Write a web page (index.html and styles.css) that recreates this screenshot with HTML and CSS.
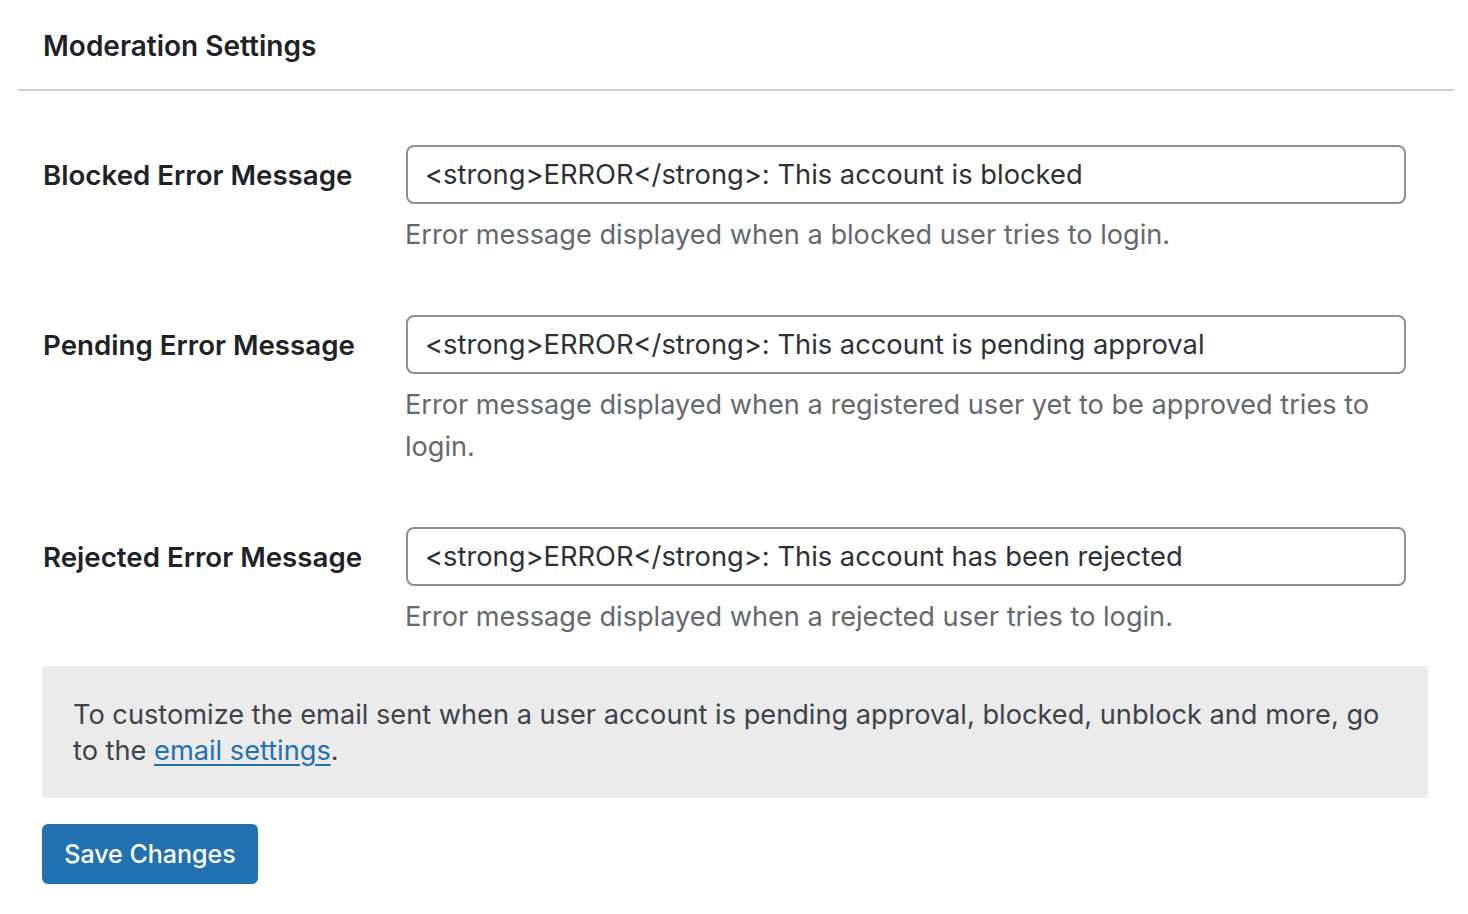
FILE: index.html
```html
<!DOCTYPE html>
<html lang="en">
<head>
<meta charset="utf-8">
<title>Moderation Settings</title>
<link rel="stylesheet" href="styles.css">
</head>
<body>
<div class="page">
  <h2 class="section-title">Moderation Settings</h2>
  <form class="settings">
    <div class="form-table">
      <div class="row">
        <label class="label" for="blocked">Blocked Error Message</label>
        <div class="field">
          <input class="text-input" id="blocked" type="text" value="<strong>ERROR</strong>: This account is blocked">
          <p class="description">Error message displayed when a blocked user tries to login.</p>
        </div>
      </div>
      <div class="row">
        <label class="label" for="pending">Pending Error Message</label>
        <div class="field">
          <input class="text-input" id="pending" type="text" value="<strong>ERROR</strong>: This account is pending approval">
          <p class="description">Error message displayed when a registered user yet to be approved tries to login.</p>
        </div>
      </div>
      <div class="row">
        <label class="label" for="rejected">Rejected Error Message</label>
        <div class="field">
          <input class="text-input" id="rejected" type="text" value="<strong>ERROR</strong>: This account has been rejected">
          <p class="description">Error message displayed when a rejected user tries to login.</p>
        </div>
      </div>
    </div>
    <div class="notice">
      <p>To customize the email sent when a user account is pending approval, blocked, unblock and more, go to the <a href="#">email settings</a>.</p>
    </div>
    <div class="submit">
      <button type="button" class="button-primary">Save Changes</button>
    </div>
  </form>
</div>
</body>
</html>
```

FILE: styles.css
```css
* { box-sizing: border-box; }
html, body { margin: 0; padding: 0; background: #fff; }
body {
  font-family: "Inter", "Roboto", "Liberation Sans", sans-serif;
  color: #1d2327;
}
.page {
  padding: 0 14px 0 18px;
}
.section-title {
  margin: 0;
  padding: 26px 0 23px 25px;
  font-size: 28px;
  line-height: 40px;
  font-weight: 600;
  color: #1d2327;
  border-bottom: 2px solid #d0d0d0;
}
.settings {
  padding: 0 26px 0 24px;
}
.form-table {
  padding-top: 54px;
}
.row {
  display: grid;
  grid-template-columns: 364px 1000px;
  align-items: start;
  padding-bottom: 59px;
}
.row:last-child { padding-bottom: 29px; }
.label {
  padding: 1px 0 0 1px;
  font-size: 27.7px;
  line-height: 59px;
  font-weight: 600;
  color: #1d2327;
}
.field { display: flex; flex-direction: column; }
.text-input {
  width: 1000px;
  height: 59px;
  margin: 0;
  padding: 0 18px 0 17px;
  border: 2px solid #8c8f94;
  border-radius: 8px;
  font-family: inherit;
  font-size: 27.3px;
  color: #2c3338;
  background: #fff;
}
.description {
  margin: 10px 0 0 -1px;
  font-size: 27.15px;
  line-height: 42px;
  color: #646970;
  padding-right: 20px;
}
.row:last-child .description { margin-bottom: -1px; }
.notice {
  background: #ebebeb;
  padding: 31px 40px 29px 31px;
}
.notice p {
  margin: 0;
  font-size: 27.2px;
  line-height: 36px;
  color: #3c434a;
}
.notice a { color: #2271b1; text-decoration: underline; text-underline-offset: 4px; }
.submit { padding-top: 26px; }
.button-primary {
  width: 216px;
  height: 60px;
  padding: 0;
  border: none;
  border-radius: 6px;
  background: #2271b1;
  color: #fff;
  font-family: inherit;
  font-size: 25px;
  font-weight: 500;
}
```
